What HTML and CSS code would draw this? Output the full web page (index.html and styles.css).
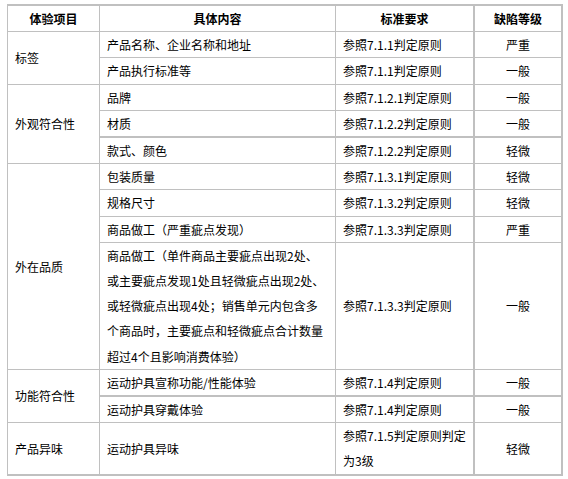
FILE: index.html
```html
<!DOCTYPE html>
<html lang="zh-CN">
<head>
<meta charset="utf-8">
<link rel="stylesheet" href="styles.css">
</head>
<body>
<div class="wrap">
<table class="grid">
  <colgroup>
    <col class="c1"><col class="c2"><col class="c3"><col class="c4">
  </colgroup>
  <tr class="head">
    <th>体验项目</th><th>具体内容</th><th class="thick-r">标准要求</th><th class="thick-r">缺陷等级</th>
  </tr>
  <tr>
    <td rowspan="2">标签</td><td>产品名称、企业名称和地址</td><td class="thick-r">参照7.1.1判定原则</td><td class="lvl">严重</td>
  </tr>
  <tr>
    <td>产品执行标准等</td><td class="thick-r">参照7.1.1判定原则</td><td class="lvl">一般</td>
  </tr>
  <tr>
    <td rowspan="3">外观符合性</td><td>品牌</td><td class="thick-r">参照7.1.2.1判定原则</td><td class="lvl">一般</td>
  </tr>
  <tr class="thick-b">
    <td>材质</td><td class="thick-r">参照7.1.2.2判定原则</td><td class="lvl">一般</td>
  </tr>
  <tr>
    <td>款式、颜色</td><td class="thick-r">参照7.1.2.2判定原则</td><td class="lvl">轻微</td>
  </tr>
  <tr>
    <td rowspan="4">外在品质</td><td>包装质量</td><td class="thick-r">参照7.1.3.1判定原则</td><td class="lvl">轻微</td>
  </tr>
  <tr>
    <td>规格尺寸</td><td class="thick-r">参照7.1.3.2判定原则</td><td class="lvl">轻微</td>
  </tr>
  <tr>
    <td>商品做工（严重疵点发现）</td><td class="thick-r">参照7.1.3.3判定原则</td><td class="lvl">严重</td>
  </tr>
  <tr>
    <td>商品做工（单件商品主要疵点出现2处、或主要疵点发现1处且轻微疵点出现2处、或轻微疵点出现4处；销售单元内包含多个商品时，主要疵点和轻微疵点合计数量超过4个且影响消费体验）</td><td class="thick-r">参照7.1.3.3判定原则</td><td class="lvl">一般</td>
  </tr>
  <tr>
    <td rowspan="2">功能符合性</td><td>运动护具宣称功能/性能体验</td><td class="thick-r">参照7.1.4判定原则</td><td class="lvl">一般</td>
  </tr>
  <tr class="thick-t">
    <td>运动护具穿戴体验</td><td class="thick-r">参照7.1.4判定原则</td><td class="lvl">一般</td>
  </tr>
  <tr class="last">
    <td>产品异味</td><td>运动护具异味</td><td class="thick-r">参照7.1.5判定原则判定为3级</td><td class="lvl">轻微</td>
  </tr>
</table>
</div>
</body>
</html>
```
FILE: styles.css
```css
html, body {
  margin: 0;
  padding: 0;
  background: #fff;
}
.wrap {
  padding: 4px 0 0 7px;
}
.grid {
  border-collapse: separate;
  border-spacing: 0;
  table-layout: fixed;
  width: 555px;
  border-top: 2px solid #c0c0c0;
  border-left: 1px solid #c0c0c0;
  font-family: "Noto Sans CJK SC", "Noto Sans", sans-serif;
  font-size: 12px;
  color: #000;
}
.c1 { width: 92px; }
.c2 { width: 236px; }
.c3 { width: 139px; }
.c4 { width: 88px; }
.grid th,
.grid td {
  border-right: 1px solid #c0c0c0;
  border-bottom: 1px solid #c0c0c0;
  padding: 0 8px 0 7px;
  line-height: 25.2px;
  text-align: left;
  vertical-align: middle;
  word-break: break-all;
}
.grid th {
  font-weight: bold;
  text-align: center;
  padding: 0;
}
.grid .thick-r {
  border-right-width: 2px;
  padding-right: 6px;
}
.grid th.thick-r { padding: 0; }
.grid tr > :last-child {
  border-right-width: 2px;
}
.grid td.lvl {
  text-align: center;
  padding: 0;
}
.thick-b td {
  border-bottom-width: 2px;
}
.thick-t td {
  border-top: 1px solid #c0c0c0;
}
.grid tr.last td {
  border-bottom-width: 2px;
}
```
